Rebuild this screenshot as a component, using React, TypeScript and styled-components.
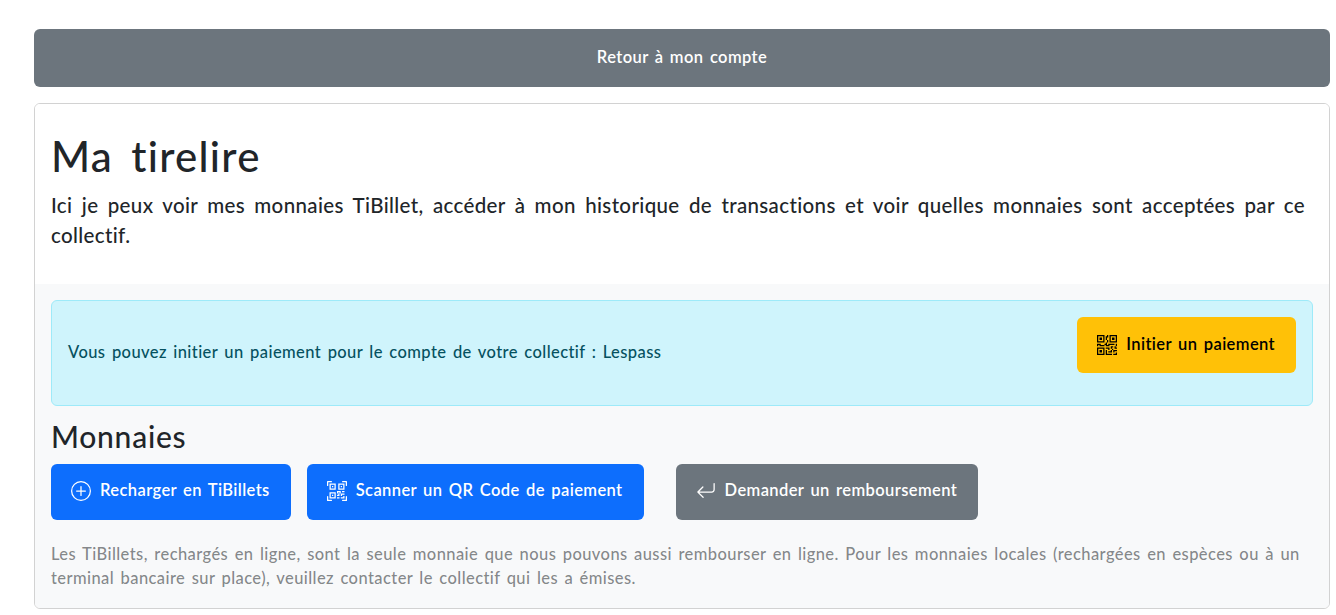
import React from "react";
import styled, { createGlobalStyle } from "styled-components";
import { BsArrowReturnLeft, BsPlusCircle, BsQrCode, BsQrCodeScan } from "react-icons/bs";

const GlobalStyle = createGlobalStyle`
  * {
    box-sizing: border-box;
  }

  body {
    margin: 0;
    background: #fff;
    color: #212529;
    font-family: "Lato", "Noto Sans", sans-serif;
    font-size: 16.5px;
    line-height: 24px;
    font-variant-ligatures: none;
    letter-spacing: 0.025em;
    word-spacing: 0.115em;
  }
`;

const App: React.FC = () => {
  return (
    <Page>
      <GlobalStyle />
      <BackButton>Retour à mon compte</BackButton>
      <Card>
        <Header>
          <Title>Ma tirelire</Title>
          <Lead>
            Ici je peux voir mes monnaies TiBillet, accéder à mon historique de transactions et voir quelles
            monnaies sont acceptées par ce collectif.
          </Lead>
        </Header>
        <Body>
          <Alert>
            <AlertText>Vous pouvez initier un paiement pour le compte de votre collectif : Lespass</AlertText>
            <Button variant="warning">
              <BsQrCode size={20} />
              Initier un paiement
            </Button>
          </Alert>
          <SectionTitle>Monnaies</SectionTitle>
          <Actions>
            <Button variant="primary">
              <BsPlusCircle size={20} />
              Recharger en TiBillets
            </Button>
            <Button variant="primary">
              <BsQrCodeScan size={20} />
              Scanner un QR Code de paiement
            </Button>
            <RefundButton variant="secondary">
              <BsArrowReturnLeft size={20} />
              Demander un remboursement
            </RefundButton>
          </Actions>
          <Muted>
            Les TiBillets, rechargés en ligne, sont la seule monnaie que nous pouvons aussi rembourser en ligne.
            Pour les monnaies locales (rechargées en espèces ou à un terminal bancaire sur place), veuillez
            contacter le collectif qui les a émises.
          </Muted>
        </Body>
      </Card>
    </Page>
  );
};

export default App;

const colors = {
  primary: { bg: "#0d6efd", fg: "#fff" },
  secondary: { bg: "#6c757d", fg: "#fff" },
  warning: { bg: "#ffc107", fg: "#000" },
};

const Page = styled.div`
  height: 615px;
  overflow: hidden;
  padding: 29px 6px 0 34px;
`;

const BackButton = styled.button`
  display: block;
  width: 100%;
  height: 58px;
  margin-bottom: 16px;
  padding: 0 0 2px;
  border: 0;
  border-radius: 6px;
  background: #6c757d;
  color: #fff;
  font: inherit;
  letter-spacing: inherit;
  word-spacing: inherit;
  font-weight: 600;
`;

const Card = styled.div`
  border: 1px solid rgba(0, 0, 0, 0.175);
  border-radius: 6px;
  overflow: hidden;
  height: 506px;
`;

const Header = styled.div`
  height: 180px;
  padding: 26px 24px 0 16px;
  background: #fff;
`;

const Title = styled.h1`
  margin: 0 0 7px;
  font-size: 42px;
  font-weight: 500;
  line-height: 53px;
  letter-spacing: 0.03em;
  word-spacing: 0.15em;
`;

const Lead = styled.p`
  margin: 0;
  font-size: 20.5px;
  line-height: 30px;
  font-weight: 500;
  letter-spacing: 0.018em;
  text-align: justify;
`;

const Body = styled.div`
  height: 325px;
  padding: 16px;
  background: #f8f9fa;
`;

const Alert = styled.div`
  display: flex;
  align-items: center;
  justify-content: space-between;
  height: 106px;
  padding: 16px;
  border: 1px solid #9eeaf9;
  border-radius: 6px;
  background: #cff4fc;
  color: #055160;
  font-weight: 500;

  button {
    margin-bottom: 16px;
    padding-bottom: 2px;
  }
`;

const AlertText = styled.span`
  margin-top: -2px;
`;

const SectionTitle = styled.h2`
  margin: 11px 0 9px;
  font-size: 30px;
  font-weight: 500;
  line-height: 38px;
  letter-spacing: 0.025em;
`;

const Actions = styled.div`
  display: flex;
  gap: 16px;
`;

const Button = styled.button<{ variant: keyof typeof colors }>`
  display: inline-flex;
  align-items: center;
  gap: 9px;
  height: 56px;
  padding: 0 21px 4px 20px;
  border: 0;
  border-radius: 6px;
  background: ${(props) => colors[props.variant].bg};
  color: ${(props) => colors[props.variant].fg};
  font: inherit;
  letter-spacing: 0.024em;
  word-spacing: inherit;
  font-weight: 600;
  white-space: nowrap;

  svg {
    flex-shrink: 0;
    margin-top: 2px;
  }
`;

const RefundButton = styled(Button)`
  margin-left: 16px;
`;

const Muted = styled.p`
  margin: 22px 0 0;
  color: rgba(33, 37, 41, 0.55);
  font-weight: 500;
`;
